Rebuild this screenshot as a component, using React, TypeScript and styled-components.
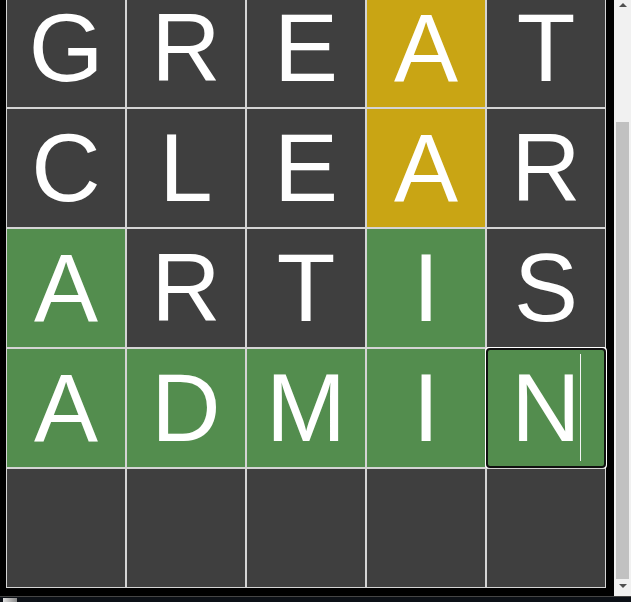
import React, { useCallback, useLayoutEffect, useRef, useState } from "react";
import styled, { createGlobalStyle } from "styled-components";

type Status = "absent" | "present" | "correct" | "empty";

const GlobalStyle = createGlobalStyle`
  html, body {
    margin: 0;
    padding: 0;
    background: #000;
    height: 100%;
    overflow: hidden;
  }
  #root {
    height: 100%;
  }
`;

const Shell = styled.div`
  display: flex;
  flex-direction: column;
  height: 100vh;
  background: #000;
`;

const Viewport = styled.div`
  flex: 1;
  min-height: 0;
  display: flex;
`;

const ScrollArea = styled.main`
  flex: 1;
  min-width: 0;
  overflow-y: scroll;
  background: #000;
  scrollbar-width: none;
  &::-webkit-scrollbar {
    display: none;
  }
`;

const ScrollRail = styled.div`
  flex: 0 0 17px;
  display: flex;
  flex-direction: column;
  background: #f1f1f1;
`;

const RailButton = styled.div<{ $down?: boolean }>`
  flex: 0 0 17px;
  display: flex;
  justify-content: center;
  align-items: flex-start;
  padding-top: ${(p) => (p.$down ? "5px" : "3px")};
  box-sizing: border-box;
`;

const RailTrack = styled.div`
  flex: 1;
  min-height: 0;
  padding: 0 2px;
  display: flex;
  flex-direction: column;
`;

const RailThumb = styled.div`
  background: #c1c1c1;
  flex: 0 0 auto;
`;

const Header = styled.header`
  height: 125px;
  display: flex;
  align-items: center;
  justify-content: center;
`;

const Title = styled.h1`
  margin: 0;
  font-family: "Liberation Sans", Arial, sans-serif;
  font-size: 36px;
  font-weight: 700;
  letter-spacing: 2px;
  color: #fff;
`;

const Board = styled.section`
  display: grid;
  grid-template-columns: repeat(5, 120px);
  grid-auto-rows: 120px;
  margin-left: 6px;
  padding-bottom: 8px;
  width: 600px;
`;

const TileSlot = styled.div`
  position: relative;
  display: flex;
`;

const tileColors: Record<Status, string> = {
  absent: "#3f3f3f",
  present: "#c9a514",
  correct: "#538d4e",
  empty: "#3f3f3f",
};

const Tile = styled.input<{ $status: Status }>`
  box-sizing: border-box;
  width: 120px;
  height: 120px;
  margin: 0;
  padding: 0;
  border: 1px solid #d4d4d4;
  border-radius: 0;
  background: ${(p) => tileColors[p.$status]};
  color: #fff;
  caret-color: transparent;
  font-family: "Liberation Sans", Arial, sans-serif;
  font-size: 96px;
  text-align: center;
  text-transform: uppercase;
`;

const Caret = styled.span`
  position: absolute;
  left: 94px;
  top: 6px;
  width: 1px;
  height: 107px;
  background: #f4f4f4;
  pointer-events: none;
`;

const BottomBar = styled.footer`
  flex: 0 0 6px;
  box-sizing: border-box;
  border-top: 1px solid #454545;
  background: #0c1016;
  display: flex;
  align-items: flex-end;
  padding-left: 3px;
`;

const BarIcon = styled.span`
  display: block;
  width: 14px;
  height: 4px;
  background: linear-gradient(to right, #e0e0e0, #8a8a8a);
`;

const initialRows: { word: string; status: Status[] }[] = [
  { word: "GREAT", status: ["absent", "absent", "absent", "present", "absent"] },
  { word: "CLEAR", status: ["absent", "absent", "absent", "present", "absent"] },
  { word: "ARTIS", status: ["correct", "absent", "absent", "correct", "absent"] },
  { word: "ADMIN", status: ["correct", "correct", "correct", "correct", "correct"] },
  { word: "     ", status: ["empty", "empty", "empty", "empty", "empty"] },
];

const ArrowUp = () => (
  <svg width="8" height="4" viewBox="0 0 8 4" aria-hidden="true">
    <path d="M0 4 L4 0 L8 4 Z" fill="#505050" />
  </svg>
);

const ArrowDown = () => (
  <svg width="8" height="4" viewBox="0 0 8 4" aria-hidden="true">
    <path d="M0 0 L8 0 L4 4 Z" fill="#505050" />
  </svg>
);

export default function App() {
  const [letters, setLetters] = useState<string[]>(() =>
    initialRows.flatMap((r) => r.word.split("").map((c) => c.trim()))
  );
  const [active, setActive] = useState(19);
  const [thumb, setThumb] = useState({ top: 0, height: 0 });
  const statuses = initialRows.flatMap((r) => r.status);
  const scrollRef = useRef<HTMLElement>(null);
  const trackRef = useRef<HTMLDivElement>(null);
  const focusRef = useRef<HTMLInputElement>(null);

  const syncThumb = useCallback(() => {
    const el = scrollRef.current;
    const track = trackRef.current;
    if (!el || !track) return;
    const len = track.clientHeight;
    setThumb({
      top: Math.round((el.scrollTop / el.scrollHeight) * len),
      height: Math.round((el.clientHeight / el.scrollHeight) * len),
    });
  }, []);

  useLayoutEffect(() => {
    const el = scrollRef.current;
    if (el) el.scrollTop = el.scrollHeight;
    const input = focusRef.current;
    if (input) {
      input.focus({ preventScroll: true });
      const len = input.value.length;
      input.setSelectionRange(len, len);
    }
    if (el) el.scrollTop = el.scrollHeight;
    syncThumb();
  }, [syncThumb]);

  const update = (i: number, v: string) => {
    setLetters((prev) => {
      const next = [...prev];
      next[i] = v.slice(-1).toUpperCase();
      return next;
    });
  };

  return (
    <>
      <GlobalStyle />
      <Shell>
        <Viewport>
          <ScrollArea ref={scrollRef} onScroll={syncThumb}>
            <Header>
              <Title>WORDLE</Title>
            </Header>
            <Board>
              {letters.map((l, i) => (
                <TileSlot key={i}>
                  <Tile
                    ref={i === 19 ? focusRef : undefined}
                    $status={statuses[i]}
                    value={l}
                    maxLength={1}
                    onFocus={() => setActive(i)}
                    onBlur={() => setActive((a) => (a === i ? -1 : a))}
                    onChange={(e) => update(i, e.target.value)}
                    aria-label={`Row ${Math.floor(i / 5) + 1} letter ${(i % 5) + 1}`}
                  />
                  {active === i && <Caret />}
                </TileSlot>
              ))}
            </Board>
          </ScrollArea>
          <ScrollRail>
            <RailButton>
              <ArrowUp />
            </RailButton>
            <RailTrack ref={trackRef}>
              <div style={{ flex: `0 0 ${thumb.top}px` }} />
              <RailThumb style={{ height: thumb.height }} />
            </RailTrack>
            <RailButton $down>
              <ArrowDown />
            </RailButton>
          </ScrollRail>
        </Viewport>
        <BottomBar>
          <BarIcon />
        </BottomBar>
      </Shell>
    </>
  );
}
